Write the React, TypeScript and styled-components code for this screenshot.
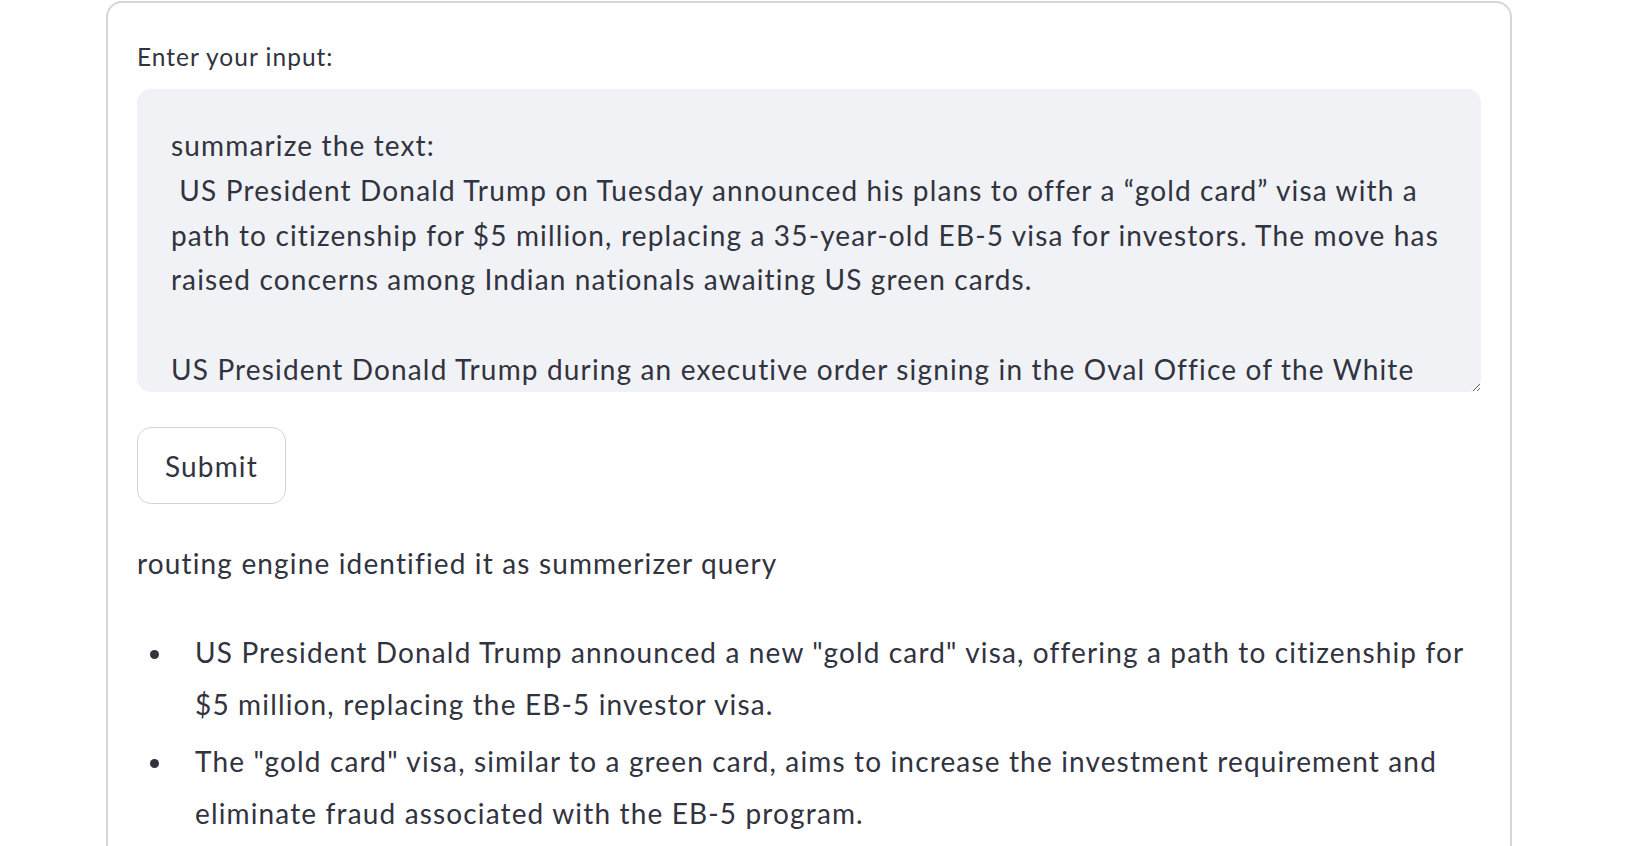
import { createGlobalStyle } from 'styled-components'
import styled from 'styled-components'

const GlobalStyle = createGlobalStyle`
  html, body {
    margin: 0;
    padding: 0;
    background: #ffffff;
    overflow: hidden;
  }
  body {
    font-family: Lato, "Noto Sans", sans-serif;
    color: #31333f;
  }
`

const inputText = `summarize the text:
 US President Donald Trump on Tuesday announced his plans to offer a “gold card” visa with a path to citizenship for $5 million, replacing a 35-year-old EB-5 visa for investors. The move has raised concerns among Indian nationals awaiting US green cards.

US President Donald Trump during an executive order signing in the Oval Office of the White House in Washington, DC, on Tuesday, Feb. 25, 2025.`

const summary = [
  'US President Donald Trump announced a new "gold card" visa, offering a path to citizenship for $5 million, replacing the EB-5 investor visa.',
  'The "gold card" visa, similar to a green card, aims to increase the investment requirement and eliminate fraud associated with the EB-5 program.',
]

const App = () => {
  return (
    <>
      <GlobalStyle />
      <Page>
        <Form onSubmit={(e) => e.preventDefault()}>
          <Label htmlFor="query">Enter your input:</Label>
          <TextArea id="query" defaultValue={inputText} spellCheck={false} />
          <SubmitButton type="submit">Submit</SubmitButton>
          <Result>routing engine identified it as summerizer query</Result>
          <Bullets>
            {summary.map((item) => (
              <BulletItem key={item}>{item}</BulletItem>
            ))}
          </Bullets>
        </Form>
      </Page>
    </>
  )
}

// Lato runs a bit narrower than the original face, so widen it slightly
const TRACKING = '0.041em'

const Page = styled.main`
  padding: 1px 116px 0 106px;
`

const Form = styled.form`
  display: flex;
  flex-direction: column;
  align-items: flex-start;
  border: 2px solid #d6d6d9;
  border-radius: 16px;
  padding: 29px 29px 40px;
  min-height: 1000px;
`

const Label = styled.label`
  display: block;
  height: 50px;
  line-height: 50px;
  font-size: 24.5px;
  letter-spacing: ${TRACKING};
  margin-bottom: 7px;
`

const TextArea = styled.textarea`
  box-sizing: border-box;
  width: 100%;
  height: 303px;
  padding: 34px;
  border: none;
  border-radius: 14px;
  background: #f0f2f6;
  color: #31333f;
  font-family: inherit;
  font-size: 28px;
  line-height: 44.8px;
  letter-spacing: ${TRACKING};
  resize: vertical;
  overflow: hidden;
  outline: none;
`

const SubmitButton = styled.button`
  margin-top: 35px;
  height: 77px;
  padding: 0 27px;
  border: 1px solid #d3d4d8;
  border-radius: 14px;
  background: #ffffff;
  color: #31333f;
  font-family: inherit;
  font-size: 28px;
  letter-spacing: ${TRACKING};
  cursor: pointer;
`

const Result = styled.p`
  margin: 37px 0 0;
  font-size: 28px;
  line-height: 44.8px;
  letter-spacing: ${TRACKING};
`

const Bullets = styled.ul`
  width: 100%;
  box-sizing: border-box;
  margin: 40px 0 0;
  padding-left: 38px;
  font-size: 28px;
  line-height: 52px;
  letter-spacing: ${TRACKING};
`

const BulletItem = styled.li`
  margin-bottom: 5px;
  padding-left: 20px;
`

export default App
